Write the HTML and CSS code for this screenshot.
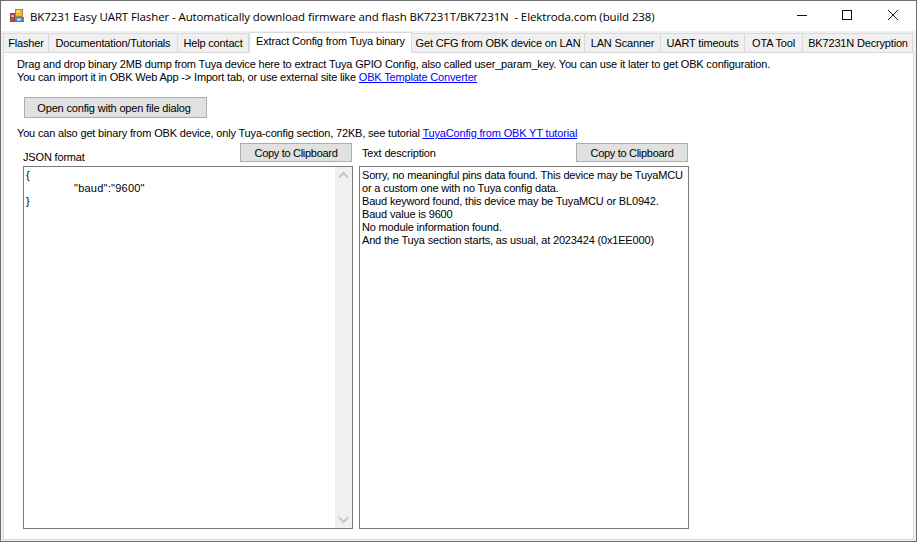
FILE: index.html
```html
<!DOCTYPE html>
<html lang="en">
<head>
<meta charset="utf-8">
<title>BK7231 Easy UART Flasher</title>
<link rel="stylesheet" href="styles.css">
</head>
<body>
<div class="window">
  <header class="titlebar">
    <svg class="app-icon" width="16" height="16" viewBox="0 0 16 16">
      <rect x="6.5" y="1.5" width="7" height="7" fill="#f2b632" stroke="#a5843a"/>
      <rect x="7.5" y="2.5" width="3" height="2" fill="#fbe58c"/>
      <rect x="1.5" y="5.5" width="4" height="8" fill="#c8453a" stroke="#7e4a44"/>
      <rect x="2.5" y="7" width="2" height="2" fill="#f2d0c8"/>
      <rect x="6.5" y="9.5" width="8" height="4" fill="#4f86d8" stroke="#5c7cae"/>
      <rect x="8" y="10.5" width="4" height="2" fill="#cfe0f7"/>
    </svg>
    <span class="title">BK7231 Easy UART Flasher - Automatically download firmware and flash BK7231T/BK7231N&nbsp; - Elektroda.com (build 238)</span>
    <div class="controls">
      <svg class="ctl" width="46" height="30" viewBox="0 0 46 30"><path d="M19 14.5h10" stroke="#111" fill="none"/></svg>
      <svg class="ctl" width="46" height="30" viewBox="0 0 46 30"><rect x="18.5" y="9.5" width="9" height="9" stroke="#111" fill="none"/></svg>
      <svg class="ctl" width="46" height="30" viewBox="0 0 46 30"><path d="M18 9l10 10M28 9L18 19" stroke="#111" fill="none"/></svg>
    </div>
  </header>
  <nav class="tabs">
    <div class="tab">Flasher</div>
    <div class="tab">Documentation/Tutorials</div>
    <div class="tab">Help contact</div>
    <div class="tab active">Extract Config from Tuya binary</div>
    <div class="tab">Get CFG from OBK device on LAN</div>
    <div class="tab">LAN Scanner</div>
    <div class="tab">UART timeouts</div>
    <div class="tab">OTA Tool</div>
    <div class="tab">BK7231N Decryption</div>
  </nav>
  <main class="panel">
    <p class="intro">Drag and drop binary 2MB dump from Tuya device here to extract Tuya GPIO Config, also called user_param_key. You can use it later to get OBK configuration.<br>You can import it in OBK Web App -&gt; Import tab, or use external site like <a href="#">OBK Template Converter</a></p>
    <button class="btn open-btn">Open config with open file dialog</button>
    <p class="note">You can also get binary from OBK device, only Tuya-config section, 72KB, see tutorial <a href="#">TuyaConfig from OBK YT tutorial</a></p>
    <div class="columns">
      <section class="col col-json">
        <div class="col-head">
          <span class="col-label">JSON format</span>
          <button class="btn copy-btn">Copy to Clipboard</button>
        </div>
        <div class="textbox json-box">
          <pre class="box-text">{
		"baud":"9600"
}</pre>
          <div class="scrollbar">
            <svg width="17" height="17" viewBox="0 0 17 17"><path d="M4 10.5l4.5-4.5 4.5 4.5" stroke="#c4c4c4" stroke-width="2" fill="none"/></svg>
            <svg width="17" height="17" viewBox="0 0 17 17"><path d="M4 6.5l4.5 4.5 4.5-4.5" stroke="#c4c4c4" stroke-width="2" fill="none"/></svg>
          </div>
        </div>
      </section>
      <section class="col col-text">
        <div class="col-head">
          <span class="col-label">Text description</span>
          <button class="btn copy-btn">Copy to Clipboard</button>
        </div>
        <div class="textbox">
          <div class="box-text">Sorry, no meaningful pins data found. This device may be TuyaMCU<br>or a custom one with no Tuya config data.<br>Baud keyword found, this device may be TuyaMCU or BL0942.<br>Baud value is 9600<br>No module information found.<br>And the Tuya section starts, as usual, at 2023424 (0x1EE000)</div>
        </div>
      </section>
    </div>
  </main>
</div>
</body>
</html>
```
FILE: styles.css
```css
* { box-sizing: border-box; }
html, body { margin: 0; padding: 0; }
body {
  width: 917px;
  height: 542px;
  overflow: hidden;
  font-family: "Liberation Sans", Arial, sans-serif;
  font-size: 11px;
  letter-spacing: -0.17px;
  color: #000;
}
.window {
  width: 917px;
  height: 542px;
  display: flex;
  flex-direction: column;
  background: #f0f0f0;
  border: 1px solid #6e6e6e;
  padding-bottom: 1px;
}
.titlebar {
  flex: none;
  height: 30px;
  display: flex;
  align-items: center;
  background: #fff;
  padding-left: 8px;
}
.app-icon { flex: none; margin-right: 5px; }
.title {
  flex: 1;
  font-family: "Open Sans", "Noto Sans", sans-serif;
  font-size: 11.5px;
  letter-spacing: -0.11px;
  white-space: nowrap;
  color: #000;
}
.controls { display: flex; flex: none; }
.ctl { display: block; }
.tabs {
  flex: none;
  height: 22px;
  display: flex;
  align-items: flex-end;
  margin-left: 2px;
  position: relative;
  z-index: 1;
}
.tab {
  flex: none;
  height: 20px;
  line-height: 19px;
  text-align: center;
  white-space: nowrap;
  background: #f0f0f0;
  border: 1px solid #d9d9d9;
  border-left-width: 0;
}
.tab:nth-child(1) { width: 46px; border-left-width: 1px; }
.tab:nth-child(2) { width: 129px; }
.tab:nth-child(3) { width: 71px; }
.tab:nth-child(4) { width: 163px; }
.tab:nth-child(5) { width: 173px; }
.tab:nth-child(6) { width: 76px; }
.tab:nth-child(7) { width: 84px; }
.tab:nth-child(8) { width: 58px; }
.tab:nth-child(9) { width: 110px; padding-left: 1px; }
.tab.active {
  height: 21px;
  line-height: 16px;
  background: #fff;
  border-left-width: 1px;
  border-bottom-color: #fff;
}
.panel {
  flex: 1;
  min-height: 0;
  margin: -1px 2px 0 2px;
  padding: 5px 0 0 13px;
  background: #fff;
  border: 1px solid #d9d9d9;
  display: flex;
  flex-direction: column;
  align-items: flex-start;
}
.intro { margin: 0; line-height: 13px; }
a { color: #0000ff; text-decoration: underline; }
.btn {
  font: inherit;
  letter-spacing: inherit;
  color: #000;
  background: #e1e1e1;
  border: 1px solid #adadad;
  border-radius: 0;
  padding: 0;
}
.open-btn { width: 183px; height: 21px; margin: 13px 0 0 7px; padding-right: 3px; }
.note { margin: 9px 0 0; line-height: 13px; }
.columns {
  display: flex;
  margin: 3px 0 0 6px;
  flex: 1;
  min-height: 0;
  gap: 6px;
  padding-bottom: 10px;
}
.col { display: flex; flex-direction: column; width: 330px; }
.col-head {
  flex: none;
  height: 21px;
  display: flex;
  justify-content: space-between;
  align-items: center;
  margin-bottom: 2px;
}
.col-json .col-head { padding-right: 1px; }
.col-text .col-head { padding-right: 1px; }
.col-label { padding-top: 6px; }
.col-text .col-label { padding: 0 0 2px 3px; }
.copy-btn { width: 112px; height: 19px; align-self: flex-start; letter-spacing: -0.3px; }
.textbox {
  flex: 1;
  min-height: 0;
  display: flex;
  background: #fff;
  border: 1px solid #7a7a7a;
}
.box-text {
  flex: 1;
  margin: 0;
  padding: 2px 0 0 2px;
  font: inherit;
  line-height: 13px;
}
.json-box .box-text {
  letter-spacing: 0.24px;
  tab-size: 24px;
}
.scrollbar {
  flex: none;
  width: 17px;
  background: #f0f0f0;
  display: flex;
  flex-direction: column;
  justify-content: space-between;
}
.scrollbar svg { display: block; }
```
